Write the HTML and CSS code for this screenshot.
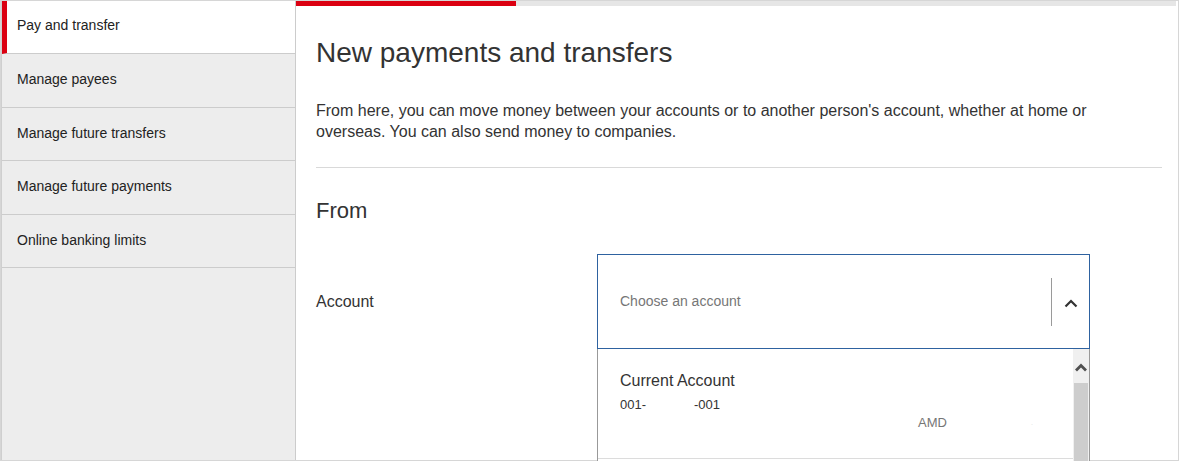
FILE: index.html
```html
<!DOCTYPE html>
<html lang="en">
<head>
<meta charset="utf-8">
<title>New payments and transfers</title>
<link rel="stylesheet" href="styles.css">
</head>
<body>
<div class="frame">
  <nav class="sidebar">
    <a class="nav-item active" href="#">Pay and transfer</a>
    <a class="nav-item" href="#">Manage payees</a>
    <a class="nav-item" href="#">Manage future transfers</a>
    <a class="nav-item" href="#">Manage future payments</a>
    <a class="nav-item" href="#">Online banking limits</a>
  </nav>
  <main class="main">
    <div class="progress"><div class="progress-fill" style="width:25%"></div></div>
    <div class="content">
      <h1 class="title">New payments and transfers</h1>
      <p class="intro">From here, you can move money between your accounts or to another person's account, whether at home or overseas. You can also send money to companies.</p>
      <hr class="rule">
      <h2 class="section">From</h2>
      <div class="form-row">
        <label class="label">Account</label>
        <div class="select-wrap">
          <div class="select">
            <span class="placeholder">Choose an account</span>
            <span class="divider"></span>
            <span class="chev">
              <svg width="14" height="9" viewBox="0 0 14 9"><path d="M1.5 7.5 L7 2 L12.5 7.5" fill="none" stroke="#333" stroke-width="2.2"/></svg>
            </span>
          </div>
          <div class="dropdown">
            <div class="options">
              <div class="option">
                <div class="opt-name">Current Account</div>
                <div class="opt-num"><span>001-</span><span class="gap"></span><span>-001</span></div>
                <div class="opt-bal"><span class="cur">AMD</span><span class="amt">.</span></div>
              </div>
            </div>
            <div class="scrollbar">
              <div class="sb-up">
                <svg width="12" height="9" viewBox="0 0 12 9"><path d="M1 7.5 L6 2.5 L11 7.5" fill="none" stroke="#505050" stroke-width="2.8"/></svg>
              </div>
              <div class="sb-thumb"></div>
            </div>
          </div>
        </div>
      </div>
    </div>
  </main>
</div>
</body>
</html>
```

FILE: styles.css
```css
* { box-sizing: border-box; }

html, body {
  margin: 0;
  padding: 0;
  background: #fff;
  overflow: hidden;
}

body {
  font-family: "Liberation Sans", Arial, sans-serif;
  color: #333;
}

.frame {
  width: 1179px;
  height: 461px;
  border: 1px solid #d6d6d6;
  display: flex;
}

.sidebar {
  width: 295px;
  flex: none;
  background: #ededed;
  border-left: 1px solid #cfcfcf;
  border-right: 1px solid #cccccc;
  display: flex;
  flex-direction: column;
}

.nav-item {
  display: block;
  height: 53.5px;
  padding: 16px 0 0 15px;
  border-bottom: 1px solid #cccccc;
  font-size: 14px;
  line-height: 18px;
  color: #222;
  text-decoration: none;
}

.nav-item.active {
  background: #fff;
  border-left: 5px solid #db0011;
  border-bottom: 1px solid #cccccc;
  padding-left: 10px;
  height: 53px;
  padding-top: 15px;
}

.main {
  flex: 1;
  min-width: 0;
  background: #fff;
  display: flex;
  flex-direction: column;
}

.progress {
  height: 5px;
  background: #e6e6e6;
  margin-right: 2px;
}

.progress-fill {
  height: 100%;
  background: #db0011;
}

.content {
  padding: 0 16px 0 20px;
}

.title {
  margin: 31px 0 0;
  font-size: 28px;
  line-height: 32px;
  font-weight: normal;
  color: #333;
}

.intro {
  margin: 31px 0 0;
  max-width: 790px;
  font-size: 16px;
  line-height: 21px;
  color: #333;
}

.rule {
  margin: 25px 0 0;
  border: 0;
  border-top: 1px solid #d9d9d9;
  height: 0;
}

.section {
  margin: 30px 0 0;
  font-size: 22px;
  line-height: 26px;
  font-weight: normal;
  color: #333;
}

.form-row {
  margin-top: 30px;
  display: grid;
  grid-template-columns: 281px 493px;
  align-items: center;
}

.label {
  font-size: 16px;
  line-height: 20px;
  color: #333;
}

.select-wrap {
  position: relative;
}

.select {
  height: 95px;
  border: 1px solid #2e62a0;
  display: flex;
  align-items: center;
  background: #fff;
}

.placeholder {
  flex: 1;
  padding-left: 22px;
  padding-bottom: 2px;
  font-size: 14px;
  color: #767676;
}

.divider {
  width: 1px;
  height: 48px;
  background: #9a9a9a;
  margin-top: 1px;
}

.chev {
  width: 37px;
  display: flex;
  justify-content: center;
  align-items: center;
  padding-top: 3px;
}

.chev svg { display: block; }

.dropdown {
  position: absolute;
  top: 100%;
  left: 0;
  width: 493px;
  height: 220px;
  background: #fff;
  border-left: 1px solid #999;
  border-right: 1px solid #999;
  display: flex;
}

.options {
  flex: 1;
}

.option {
  padding: 23px 0 27px 22px;
  border-bottom: 1px solid #dcdcdc;
}

.opt-name {
  font-size: 16px;
  line-height: 18px;
  color: #333;
}

.opt-num {
  margin-top: 7px;
  font-size: 13px;
  line-height: 16px;
  color: #333;
  display: flex;
}

.opt-num .gap { width: 48px; }

.opt-bal {
  margin-top: 2px;
  font-size: 13px;
  line-height: 16px;
  display: flex;
  justify-content: flex-end;
  padding-right: 40px;
}

.cur { color: #767676; }

.amt {
  width: 86px;
  text-align: right;
  color: #dcdcdc;
  font-size: 7px;
}

.scrollbar {
  width: 16px;
  flex: none;
  background: #f0f0f0;
  display: flex;
  flex-direction: column;
}

.sb-up {
  height: 34px;
  display: flex;
  justify-content: center;
  align-items: center;
  padding-top: 10px;
  padding-bottom: 8px;
}

.sb-up svg { display: block; }

.sb-thumb {
  flex: 1;
  margin: 0 1px;
  background: #cdcdcd;
}
```
